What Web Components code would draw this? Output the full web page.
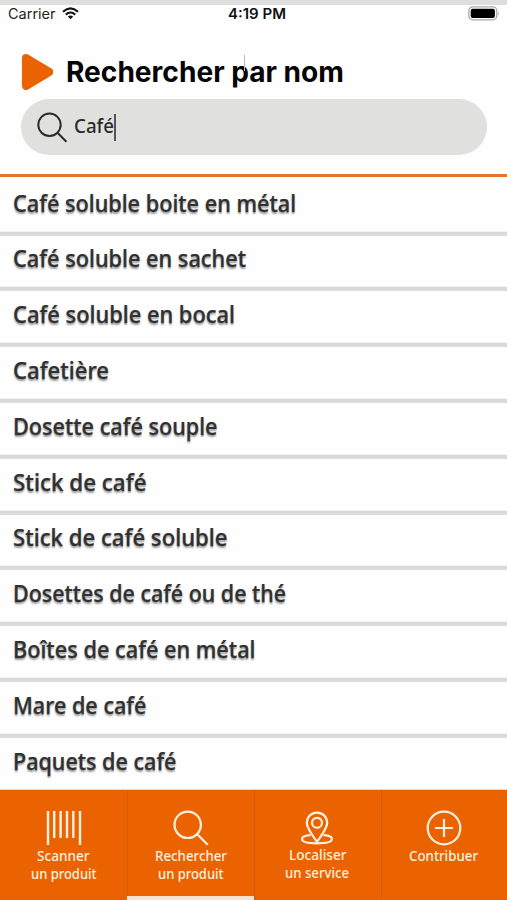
<!DOCTYPE html>
<html lang="fr">
<head>
<meta charset="utf-8">
<title>Rechercher par nom</title>
<style>
html,body{margin:0;padding:0;background:#fefefe}
body{width:507px;height:900px;overflow:hidden}
</style>
</head>
<body>
<search-screen></search-screen>
<script>
const make = (name, html, after) => customElements.define(name, class extends HTMLElement {
  connectedCallback() {
    if (this.shadowRoot) return;
    this.attachShadow({mode: 'open'}).innerHTML = html;
    if (after) after(this, this.shadowRoot);
  }
});

// A single line of text condensed or widened to the width given in "w".
make('fit-text', `<style>
:host{display:block;white-space:nowrap}
span{display:inline-block;transform-origin:0 50%}
</style><span></span>`, (el, root) => {
  const s = root.querySelector('span'), w = +el.getAttribute('w');
  s.textContent = el.getAttribute('text');
  el.style.width = w + 'px';
  s.style.transform = `scaleX(${w / s.getBoundingClientRect().width})`;
});

make('status-bar', `<style>
:host{display:grid;grid-template-columns:1fr auto 1fr;align-items:center;box-sizing:border-box;height:22px;border-top:5.5px solid #dedede;padding:0 7px 0 8px;font:400 14px/16px Inter,sans-serif;color:#222}
.l{display:flex;align-items:center;gap:6px}
.t{font-weight:600;color:#111;margin-left:5px}
.r{justify-self:end;display:flex}
svg{display:block}
</style>
<div class="l"><fit-text w="47.5" text="Carrier"></fit-text>
<svg width="17" height="13" viewBox="0 0 17 13"><g fill="none" stroke="#111" stroke-width="2.1"><path d="M1 4.7Q8.5-2 16 4.7"/><path d="M3.8 7.6Q8.5 3.4 13.2 7.6"/></g><path d="M8.5 12.2L5.8 9.5Q8.5 7.3 11.2 9.5Z" fill="#111"/></svg></div>
<fit-text class="t" w="58" text="4:19 PM"></fit-text>
<div class="r"><svg width="32" height="15" viewBox="0 0 32 15"><rect x=".8" y=".8" width="28" height="13" rx="4" fill="#fff" stroke="#aaa" stroke-width="1.3"/><rect x="2.7" y="2.7" width="24.2" height="9.2" rx="2" fill="#000"/><path d="M30.3 5.5q1.5 2 0 4z" fill="#999"/></svg></div>`);

make('page-title', `<style>
:host{display:flex;align-items:center;gap:13px;height:40px;margin:30px 0 0 21px;font:700 28px/40px Inter,sans-serif;color:#050505}
svg{display:block}
fit-text{position:relative}
fit-text::after{content:"";position:absolute;left:178px;top:3px;width:1px;height:16px;background:#bbb}
</style>
<svg width="32" height="36" viewBox="0 0 32 36"><path d="M5 4L28.3 18L5 32Z" fill="#eb6300" stroke="#eb6300" stroke-width="8" stroke-linejoin="round"/></svg>
<fit-text w="278" text="Rechercher par nom"></fit-text>`);

make('search-field', `<style>
:host{display:flex;align-items:center;box-sizing:border-box;height:56px;margin:7px 20px 0 21px;padding-left:16px;border-radius:28px;background:#e0e0de;font:500 20px/28px "Noto Sans","Open Sans",sans-serif;color:#2b2b2b}
svg{display:block;margin-right:6px}
i{width:2px;height:27px;background:#555}
fit-text{margin-top:-2px}
</style>
<svg width="31" height="31" viewBox="0 0 31 31" fill="none" stroke="#2b2b2b" stroke-width="2"><circle cx="12.5" cy="12.8" r="11.2"/><path d="M20.5 20.8L29.4 29.7"/></svg>
<fit-text w="40" text="Café"></fit-text><i></i>`);

make('result-row', `<style>
:host{display:block;box-sizing:border-box;height:55.8px;padding:6px 0 0 13px;font:500 23px/33px "Noto Sans","Open Sans",sans-serif;color:#303030;-webkit-text-stroke:.25px #303030;text-shadow:0 2px 2px rgba(0,0,0,.4);
background:linear-gradient(#fefefe 0 50.2px,#d9d9d9 51.2px 53.4px,#e0e0e0 54.5px,#fefefe 55.8px)}
:host([last]){background:none;height:53px}
</style><slot></slot>`);

make('nav-tab', `<style>
:host{display:flex;flex-direction:column;align-items:center;box-sizing:border-box;padding-top:20px;height:110px;box-shadow:inset 1px 0 0 #d65b04}
:host(:first-of-type){box-shadow:none}
:host([active]){background:linear-gradient(#fbe2d0,#fbe2d0) 0 100%/100% 4px no-repeat;box-shadow:none}
:host([active])::before{content:"";align-self:flex-start;width:1px;height:106px;margin-bottom:-106px;background:#d65b04}
.i{height:36.5px;display:flex}
.t{display:flex;flex-direction:column;align-items:center;font:500 14px/18px "Noto Sans","Open Sans",sans-serif;color:#fff0df}
:host([active]){padding-top:0}
:host([active]) .i{padding-top:20px}
:host([raise]) .t{margin-top:-1px}
</style><div class="i"><slot name="icon"></slot></div><div class="t"><slot></slot></div>`);

make('nav-bar', `<style>
:host{display:grid;grid-template-columns:127px 127px 126.5px 1fr;height:110px;background:#eb6300;box-shadow:0 -1px 0 #fad0b3}
svg{display:block;fill:none;stroke:#fff0df;stroke-width:2.2}
</style>
<nav-tab><svg slot="icon" width="36" height="36" viewBox="0 0 36 36"><path stroke-width="2.4" d="M2 1V35M8.2 1V28M14.6 1V28M21 1V28M27.3 1V28M34 1V35"/></svg>
<fit-text w="52.5" text="Scanner"></fit-text><fit-text w="65.5" text="un produit"></fit-text></nav-tab>
<nav-tab active><svg slot="icon" width="36" height="36" viewBox="0 0 36 36"><circle cx="14.7" cy="14.8" r="13.2"/><path d="M24 24L34.7 34.7"/></svg>
<fit-text w="72" text="Rechercher"></fit-text><fit-text w="65.5" text="un produit"></fit-text></nav-tab>
<nav-tab raise><svg slot="icon" width="34" height="36" viewBox="0 0 34 36"><path d="M17 32C13.5 26.2 6.8 19 6.8 12.8A10.2 10.2 0 0 1 27.2 12.8C27.2 19 20.5 26.2 17 32Z"/><circle cx="17" cy="12.8" r="5"/><path d="M10.5 25.2C5 25.6 2 27 2 29C2 31.8 8 33.3 17 33.3S32 31.8 32 29C32 27 29 25.6 23.5 25.2"/></svg>
<fit-text w="57.5" text="Localiser"></fit-text><fit-text w="64" text="un service"></fit-text></nav-tab>
<nav-tab><svg slot="icon" width="36" height="36" viewBox="0 0 36 36"><circle cx="18" cy="18" r="16.3"/><path d="M18 9V27M9 18H27"/></svg>
<fit-text w="69" text="Contribuer"></fit-text></nav-tab>`);

const rows = [['Café soluble boite en métal',283],['Café soluble en sachet',233],['Café soluble en bocal',222],['Cafetière',96],['Dosette café souple',204.5],['Stick de café',133.5],['Stick de café soluble',214.5],['Dosettes de café ou de thé',273],['Boîtes de café en métal',242.5],['Mare de café',133.5],['Paquets de café',163.5]];
make('search-screen', `<style>
:host{display:flex;flex-direction:column;width:507px;height:900px;overflow:hidden;background:#fefefe}
header{box-sizing:border-box;height:177px;flex:none;border-bottom:3px solid #e9752c}
main{flex:1;min-height:0;padding-top:3.6px;overflow:hidden}
nav-bar{flex:none}
</style>
<header><status-bar></status-bar><page-title></page-title><search-field></search-field></header>
<main>${rows.map(([t,w],i)=>`<result-row${i==10?' last':''}><fit-text w="${w}" text="${t}"></fit-text></result-row>`).join('')}</main>
<nav-bar></nav-bar>`);
</script>
</body>
</html>
